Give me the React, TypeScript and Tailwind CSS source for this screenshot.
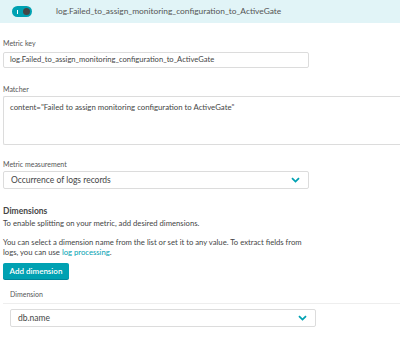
import React from "react";

function Chevron() {
  return (
    <svg width="9" height="6" viewBox="0 0 9 6" className="shrink-0">
      <path d="M1 1.2 L4.5 4.6 L8 1.2" fill="none" stroke="#00a1b2" strokeWidth="1.8" />
    </svg>
  );
}

function Select({ value, className }: { value: string; className: string }) {
  return (
    <div
      className={`flex items-center justify-between border border-[#dcdcdc] rounded-[2px] bg-white pl-[7px] pr-[8px] text-[8.5px] text-[#454646] ${className}`}
    >
      <span>{value}</span>
      <Chevron />
    </div>
  );
}

export default function App() {
  return (
    <div className="w-[400px] h-[337px] overflow-hidden bg-white text-[#454646]" style={{ fontFamily: "Lato, 'Open Sans', sans-serif" }}>
      {/* Header strip with toggle */}
      <div className="h-[23px] bg-[#e1f4f7] flex items-center">
        <div className="ml-[12px] w-[20px] h-[11px] rounded-full bg-[#00a1b2] flex items-center justify-between px-[2px]">
          <span className="ml-[3px] w-[1px] h-[4px] bg-white" />
          <span className="w-[7px] h-[7px] rounded-full bg-[#454646]" />
        </div>
        <span className="ml-[24px] text-[8.4px] text-[#555]">log.Failed_to_assign_monitoring_configuration_to_ActiveGate</span>
      </div>

      <div className="pl-[3px]">
        {/* Metric key */}
        <div className="pt-[15px] text-[7px] text-[#555] leading-[10px]">Metric key</div>
        <div className="mt-[4px] w-[306px] h-[16px] border border-[#dcdcdc] rounded-[2px] flex items-center pl-[6px] text-[7.6px]">
          log.Failed_to_assign_monitoring_configuration_to_ActiveGate
        </div>

        {/* Matcher */}
        <div className="mt-[16px] text-[7px] text-[#555] leading-[10px]">Matcher</div>
        <div className="mt-[2px] h-[49px] border border-[#dcdcdc] border-r-0 rounded-l-[2px] pl-[6px] pt-[5px] text-[7.8px]">
          content="Failed to assign monitoring configuration to ActiveGate"
        </div>

        {/* Metric measurement */}
        <div className="mt-[14px] text-[7px] text-[#555] leading-[10px]">Metric measurement</div>
        <Select value="Occurrence of logs records" className="mt-[2px] w-[306px] h-[18px]" />

        {/* Dimensions */}
        <div className="mt-[17px] text-[8.5px] font-bold text-[#454646] leading-[11px]">Dimensions</div>
        <div className="mt-[1px] text-[7.7px] leading-[11px]">To enable splitting on your metric, add desired dimensions.</div>
        <div className="mt-[8px] w-[310px] text-[7.7px] leading-[10px]">
          You can select a dimension name from the list or set it to any value. To extract fields from logs, you can use{" "}
          <span className="text-[#00a1b2]">log processing</span>.
        </div>

        <button className="mt-[6px] w-[66px] h-[16px] rounded-[2px] bg-[#00a1b2] text-white text-[8px] font-semibold flex items-center justify-center shadow-[0_1px_0_#00859a]">
          Add dimension
        </button>

        {/* Dimension table */}
        <div className="mt-[10px] pl-[7px] text-[7px] text-[#555] leading-[10px]">Dimension</div>
        <div className="mt-[4px] border-t border-[#eeeeee]" />
        <div className="pl-[7px] pt-[5px]">
          <Select value="db.name" className="w-[306px] h-[18px]" />
        </div>
      </div>
    </div>
  );
}
